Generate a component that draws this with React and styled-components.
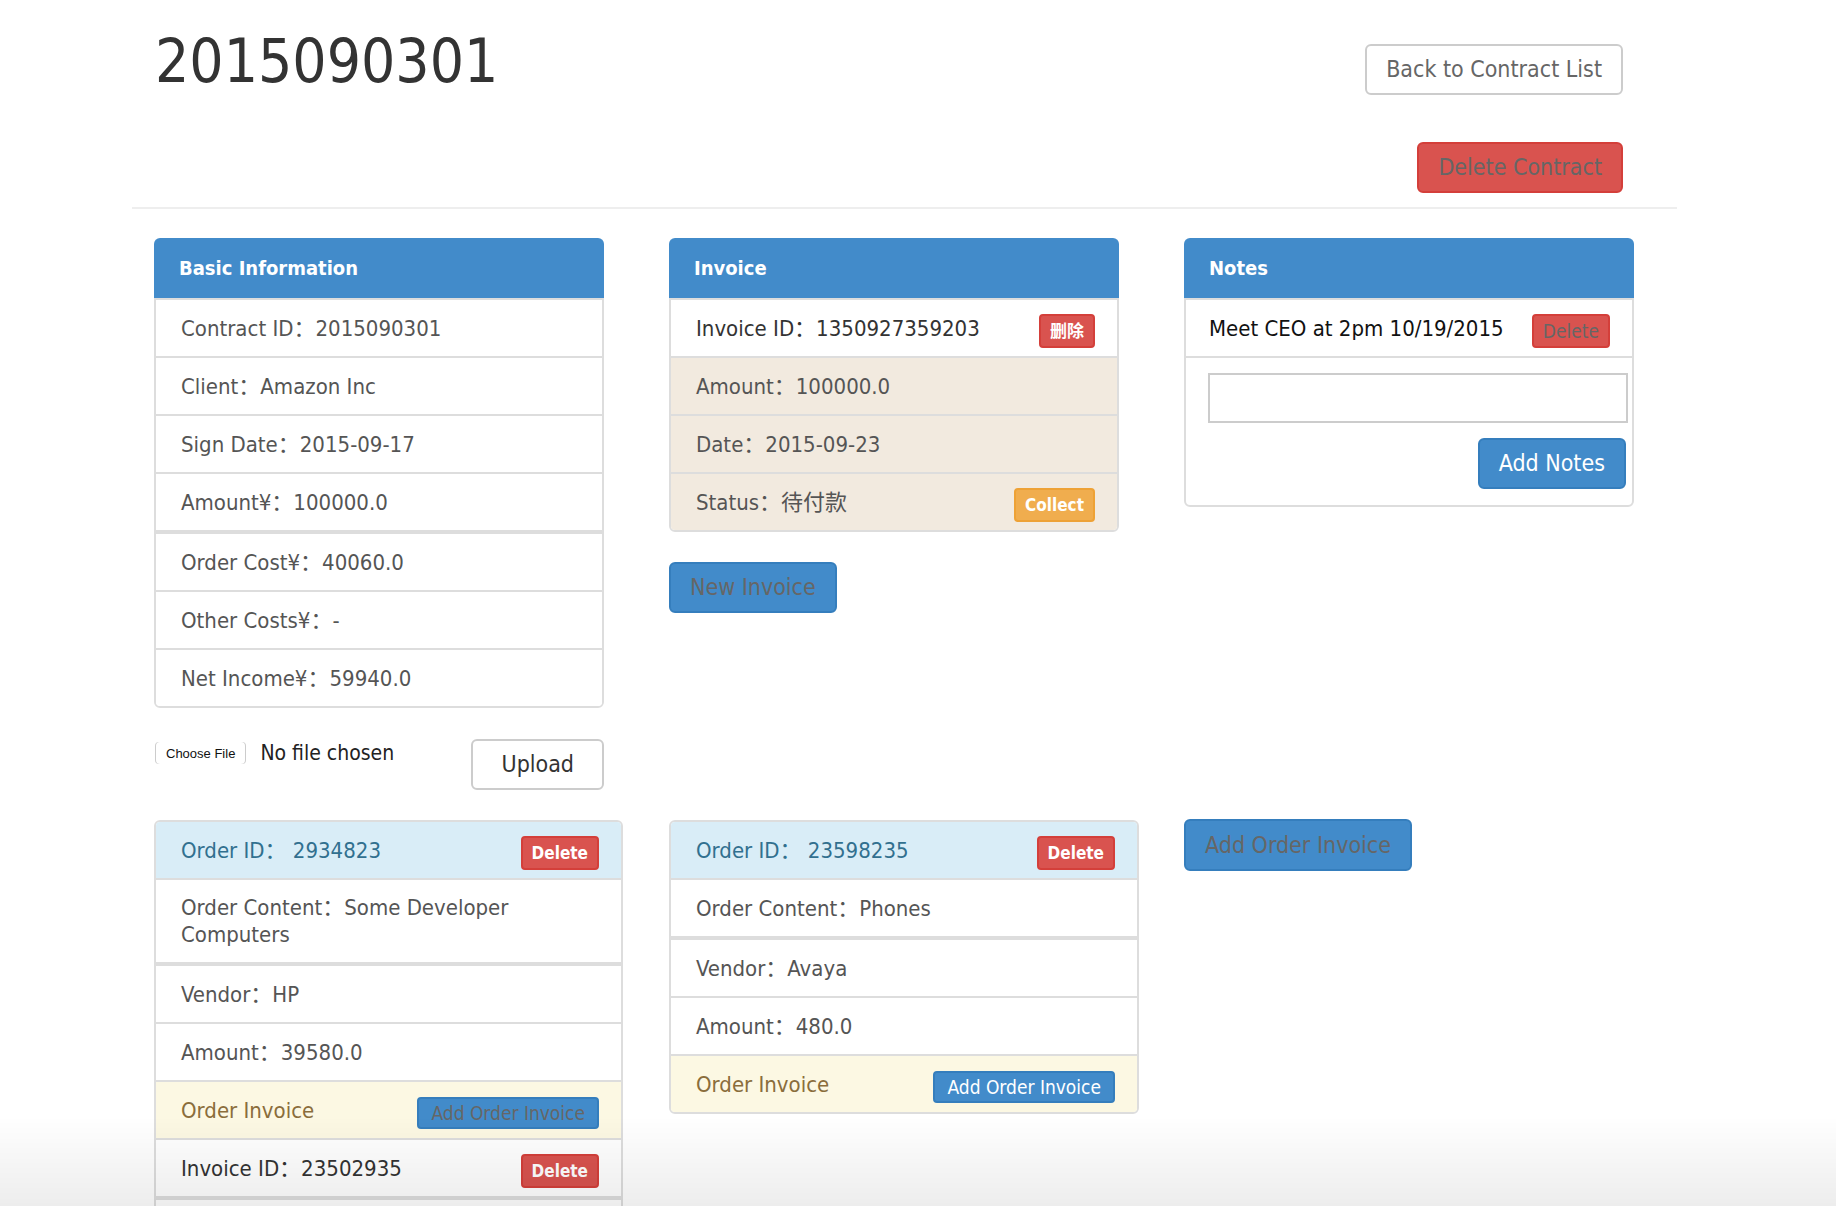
import React from 'react';
import styled, { createGlobalStyle } from 'styled-components';

const GlobalStyle = createGlobalStyle`
  * { box-sizing: border-box; }
  body {
    margin: 0;
    background: #fff;
    color: #333;
    font-family: "DejaVu Sans Condensed", "DejaVu Sans", "Noto Sans CJK SC", sans-serif;
  }
`;

const tones = {
  plain: { bg: '#fff', fg: '#555' },
  dark: { bg: '#fff', fg: '#333' },
  note: { bg: '#fff', fg: '#111' },
  beige: { bg: '#f2eadf', fg: '#555' },
  info: { bg: '#d9edf7', fg: '#31708f' },
  warn: { bg: '#fcf8e3', fg: '#8a6d3b' },
};

const variants = {
  default: { bg: '#fff', border: '#ccc', fg: '#666' },
  primary: { bg: '#428bca', border: '#357ebd', fg: '#fff' },
  danger: { bg: '#d9534f', border: '#d43f3a', fg: '#fff' },
  warning: { bg: '#f0ad4e', border: '#eea236', fg: '#fff' },
};

export default function App() {
  return (
    <>
      <GlobalStyle />
      <Page>
        <Header>
          <Title>2015090301</Title>
          <HeaderActions>
            <Button $variant="default">Back to Contract List</Button>
            <Button $variant="danger" $muted>Delete Contract</Button>
          </HeaderActions>
        </Header>
        <Rule />

        <Grid>
          <Column>
            <Panel $width={450}>
              <Heading>Basic Information</Heading>
              <Body $headed>
                <Item>Contract ID：2015090301</Item>
                <Item>Client：Amazon Inc</Item>
                <Item>Sign Date：2015-09-17</Item>
                <Item>Amount¥：100000.0</Item>
                <Item $split>Order Cost¥：40060.0</Item>
                <Item>Other Costs¥：-</Item>
                <Item>Net Income¥：59940.0</Item>
              </Body>
            </Panel>
            <UploadForm>
              <FilePicker>
                <ChooseFile type="button">Choose File</ChooseFile>
                <FileStatus>No file chosen</FileStatus>
              </FilePicker>
              <Button $variant="default" $dark $pad={28}>Upload</Button>
            </UploadForm>
          </Column>

          <Column>
            <Panel $width={450}>
              <Heading>Invoice</Heading>
              <Body $headed>
                <Item $tone="dark">
                  Invoice ID：1350927359203
                  <Label $variant="danger">删除</Label>
                </Item>
                <Item $tone="beige">Amount：100000.0</Item>
                <Item $tone="beige">Date：2015-09-23</Item>
                <Item $tone="beige">
                  Status：待付款
                  <Label $variant="warning">Collect</Label>
                </Item>
              </Body>
            </Panel>
            <NewInvoice $variant="primary" $muted>New Invoice</NewInvoice>
          </Column>

          <Column>
            <Panel $width={450}>
              <Heading>Notes</Heading>
              <Body $headed>
                <Item $tone="note" $inset>
                  Meet CEO at 2pm 10/19/2015
                  <Label $variant="danger" $muted>Delete</Label>
                </Item>
                <NoteForm>
                  <NoteInput type="text" />
                  <Button $variant="primary">Add Notes</Button>
                </NoteForm>
              </Body>
            </Panel>
          </Column>

          <Column>
            <Panel $width={469}>
              <Body>
                <Item $tone="info">
                  Order ID：&nbsp;2934823
                  <Label $variant="danger">Delete</Label>
                </Item>
                <Item $lines={2}>Order Content：Some Developer Computers</Item>
                <Item $split>Vendor：HP</Item>
                <Item>Amount：39580.0</Item>
                <Item $tone="warn">
                  Order Invoice
                  <Label $variant="primary" $muted $long>Add Order Invoice</Label>
                </Item>
                <Item $tone="dark">
                  Invoice ID：23502935
                  <Label $variant="danger">Delete</Label>
                </Item>
                <Item $split $tone="dark">Amount：39580.0</Item>
              </Body>
            </Panel>
          </Column>

          <Column>
            <Panel $width={470}>
              <Body>
                <Item $tone="info">
                  Order ID：&nbsp;23598235
                  <Label $variant="danger">Delete</Label>
                </Item>
                <Item>Order Content：Phones</Item>
                <Item $split>Vendor：Avaya</Item>
                <Item>Amount：480.0</Item>
                <Item $tone="warn">
                  Order Invoice
                  <Label $variant="primary" $long>Add Order Invoice</Label>
                </Item>
              </Body>
            </Panel>
          </Column>

          <Column>
            <AddOrderInvoice $variant="primary" $muted>Add Order Invoice</AddOrderInvoice>
          </Column>
        </Grid>
      </Page>
      <BottomFade />
    </>
  );
}

const Page = styled.div`
  width: 1677px;
  padding-left: 132px;
  padding-bottom: 40px;
`;

const Header = styled.header`
  height: 207px;
  display: flex;
  justify-content: space-between;
  padding: 0 54px 0 23px;
`;

const Title = styled.h1`
  margin: 0;
  padding-top: 31px;
  font-size: 60px;
  line-height: 1;
  font-weight: 400;
  color: #333;
`;

const HeaderActions = styled.div`
  display: flex;
  flex-direction: column;
  align-items: flex-end;
  gap: 47px;
  padding-top: 44px;
`;

const Rule = styled.div`
  border-top: 2px solid #eee;
`;

const Button = styled.button`
  height: 51px;
  padding: 0 ${p => p.$pad || 19}px;
  font-family: inherit;
  font-size: 23px;
  line-height: 1;
  border-radius: 6px;
  border: 2px solid ${p => variants[p.$variant].border};
  background: ${p => variants[p.$variant].bg};
  color: ${p => (p.$muted ? '#666' : p.$dark ? '#333' : variants[p.$variant].fg)};
  cursor: pointer;
`;

const NewInvoice = styled(Button)`
  margin-top: 30px;
`;

const AddOrderInvoice = styled(Button)`
  height: 52px;
  margin-top: -1px;
`;

const Label = styled.span`
  flex-shrink: 0;
  display: inline-flex;
  align-items: center;
  justify-content: center;
  height: ${p => (p.$long ? 32 : 34)}px;
  margin-top: 6px;
  padding: 0 ${p => (p.$long ? 12 : 9)}px;
  border-radius: 4px;
  border: 2px solid ${p => variants[p.$variant].border};
  background: ${p => variants[p.$variant].bg};
  color: ${p => (p.$muted ? '#666' : '#fff')};
  font-size: ${p => (p.$muted || p.$long ? 19 : 17)}px;
  font-weight: ${p => (p.$muted || p.$long ? 400 : 700)};
  line-height: 1;
`;

const Grid = styled.div`
  display: grid;
  grid-template-columns: repeat(3, 515px);
  row-gap: 30px;
  padding-top: 29px;
`;

const Column = styled.div`
  display: flex;
  flex-direction: column;
  align-items: flex-start;
  padding-left: 22px;
`;

const Panel = styled.section`
  width: ${p => p.$width}px;
`;

const Heading = styled.h3`
  margin: 0;
  height: 60px;
  display: flex;
  align-items: center;
  padding: 0 25px;
  background: #428bca;
  border-radius: 6px 6px 0 0;
  color: #fff;
  font-size: 20px;
  font-weight: 700;
`;

const Body = styled.ul`
  margin: 0;
  padding: 0;
  list-style: none;
  border: 2px solid #ddd;
  border-radius: ${p => (p.$headed ? '0 0 6px 6px' : '6px')};
  overflow: hidden;
`;

const Item = styled.li`
  box-sizing: content-box;
  display: flex;
  align-items: center;
  justify-content: space-between;
  gap: 12px;
  height: ${p => (p.$lines === 2 ? 82 : 56)}px;
  padding: 0 22px 0 ${p => (p.$inset ? 23 : 25)}px;
  font-size: 22px;
  line-height: 27px;
  background: ${p => tones[p.$tone || 'plain'].bg};
  color: ${p => tones[p.$tone || 'plain'].fg};
  &:not(:first-child) {
    border-top: ${p => (p.$split ? 4 : 2)}px solid #ddd;
  }
`;

const NoteForm = styled.li`
  display: flex;
  flex-direction: column;
  align-items: flex-end;
  gap: 15px;
  padding: 15px 6px 16px 22px;
  border-top: 2px solid #ddd;
`;

const NoteInput = styled.input`
  width: calc(100% + 2px);
  margin-right: -2px;
  height: 50px;
  border: 2px solid #ccc;
  border-radius: 0;
  padding: 0 12px;
  font-family: inherit;
  font-size: 20px;
  background: #fff;
`;

const UploadForm = styled.form`
  width: 450px;
  margin-top: 31px;
  display: flex;
  justify-content: space-between;
  align-items: flex-start;
`;

const FilePicker = styled.div`
  display: flex;
  align-items: center;
  margin-top: 2px;
  padding-left: 1px;
`;

const ChooseFile = styled.button`
  height: 22px;
  padding: 0 11px;
  font-family: "Liberation Sans", Arial, sans-serif;
  font-size: 13px;
  color: #111;
  background: #fff;
  border: none;
  border-radius: 4px;
  box-shadow: inset 1px 0 0 #ccc, inset -1px 0 0 #ccc;
`;

const FileStatus = styled.span`
  margin-left: 14px;
  font-size: 21px;
  color: #222;
`;

const BottomFade = styled.div`
  position: fixed;
  left: 0;
  right: 0;
  bottom: 0;
  height: 90px;
  pointer-events: none;
  background: linear-gradient(rgba(0, 0, 0, 0), rgba(0, 0, 0, 0.07));
`;
